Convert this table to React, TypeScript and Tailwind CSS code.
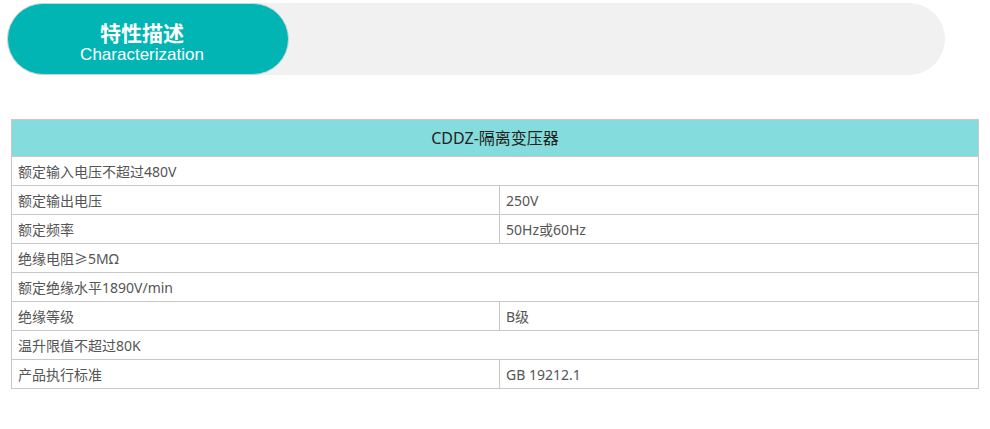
const rows: [string, string?][] = [
  ["额定输入电压不超过480V"],
  ["额定输出电压", "250V"],
  ["额定频率", "50Hz或60Hz"],
  ["绝缘电阻≥5MΩ"],
  ["额定绝缘水平1890V/min"],
  ["绝缘等级", "B级"],
  ["温升限值不超过80K"],
  ["产品执行标准", "GB 19212.1"],
];

export default function App() {
  return (
    <div className="w-[990px] h-[429px] bg-white pt-[3px] font-['Noto_Sans','Noto_Sans_CJK_SC',sans-serif]">
      {/* Section title bar */}
      <div className="ml-[7px] w-[938px] h-[72px] rounded-full bg-[#f1f1f1] flex">
        <div className="w-[282px] h-full rounded-full bg-[#02b5b5] border border-[#c9d6d6] flex flex-col items-center justify-center pt-[6px] pr-[12px] text-white">
          <div className="text-[21px] font-bold leading-[25px] font-['Noto_Sans_CJK_SC',sans-serif]">特性描述</div>
          <div className="text-[17px] leading-[19px] font-['Liberation_Sans',sans-serif]">Characterization</div>
        </div>
      </div>

      {/* Spec table */}
      <table className="mt-[44px] ml-[11px] w-[968px] border-collapse table-fixed">
        <colgroup>
          <col className="w-[488px]" />
          <col />
        </colgroup>
        <thead>
          <tr className="h-[37px]">
            <th colSpan={2} className="bg-[#84dcdc] border border-[#c8c8c8] text-[16px] font-normal text-[#222] p-0">
              CDDZ-隔离变压器
            </th>
          </tr>
        </thead>
        <tbody>
          {rows.map(([a, b], i) => (
            <tr key={i} className="h-[29px] text-[14px] text-[#555]">
              {b === undefined ? (
                <td colSpan={2} className="border border-[#c8c8c8] px-[6px] py-0">{a}</td>
              ) : (
                <>
                  <td className="border border-[#c8c8c8] px-[6px] py-0">{a}</td>
                  <td className="border border-[#c8c8c8] px-[6px] py-0">{b}</td>
                </>
              )}
            </tr>
          ))}
        </tbody>
      </table>
    </div>
  );
}
